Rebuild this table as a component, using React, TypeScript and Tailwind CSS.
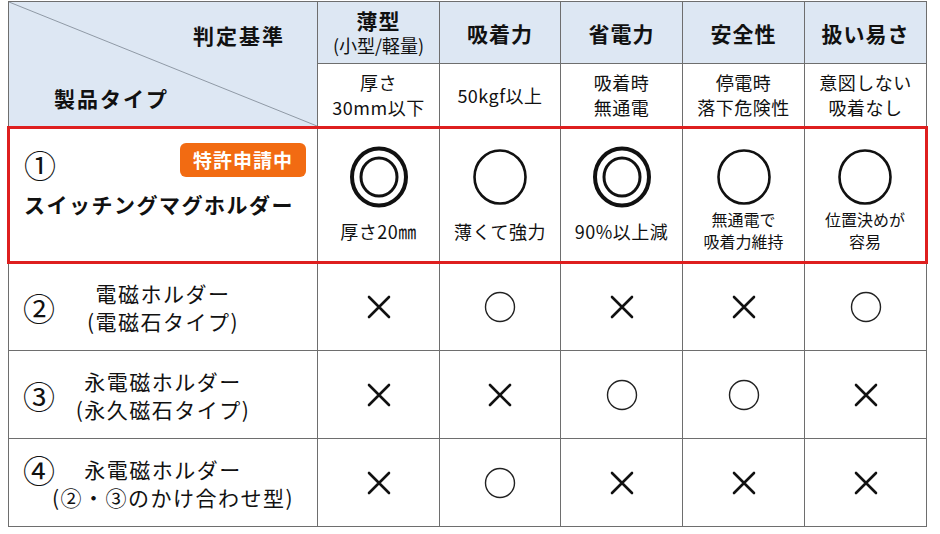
import type { ReactNode } from "react";

type Mark = "o" | "x";

const FONT = { fontFamily: '"Noto Sans CJK JP", "Noto Sans", sans-serif' };

const criteria = [
  { title: "薄型", sub: "(小型/軽量)", detail: ["厚さ", "30mm以下"] },
  { title: "吸着力", detail: ["50kgf以上"] },
  { title: "省電力", detail: ["吸着時", "無通電"] },
  { title: "安全性", detail: ["停電時", "落下危険性"] },
  { title: "扱い易さ", detail: ["意図しない", "吸着なし"] },
];

const featured: { mark: "double" | "single"; note: string[]; small?: boolean }[] = [
  { mark: "double", note: ["厚さ20㎜"] },
  { mark: "single", note: ["薄くて強力"] },
  { mark: "double", note: ["90%以上減"] },
  { mark: "single", note: ["無通電で", "吸着力維持"], small: true },
  { mark: "single", note: ["位置決めが", "容易"], small: true },
];

const others: { no: string; name: string; kind: string; wide?: boolean; marks: Mark[] }[] = [
  { no: "②", name: "電磁ホルダー", kind: "(電磁石タイプ)", marks: ["x", "o", "x", "x", "o"] },
  { no: "③", name: "永電磁ホルダー", kind: "(永久磁石タイプ)", marks: ["x", "x", "o", "o", "x"] },
  { no: "④", name: "永電磁ホルダー", kind: "(②・③のかけ合わせ型)", wide: true, marks: ["x", "o", "x", "x", "x"] },
];

function BigCircle({ double }: { double: boolean }) {
  if (double) {
    return (
      <svg width="62" height="64" viewBox="0 0 62 64">
        <ellipse cx="31" cy="32" rx="27" ry="28.5" fill="none" stroke="#111" strokeWidth="4" />
        <ellipse cx="31" cy="32" rx="18" ry="19" fill="none" stroke="#111" strokeWidth="3" />
      </svg>
    );
  }
  return (
    <svg width="58" height="60" viewBox="0 0 58 60">
      <ellipse cx="29" cy="30" rx="25.5" ry="26.5" fill="none" stroke="#111" strokeWidth="2.6" />
    </svg>
  );
}

function SmallMark({ mark }: { mark: Mark }) {
  if (mark === "o") {
    return (
      <svg width="32" height="32" viewBox="0 0 32 32">
        <circle cx="16" cy="16" r="14.5" fill="none" stroke="#222" strokeWidth="1.4" />
      </svg>
    );
  }
  return (
    <svg width="24" height="24" viewBox="0 0 24 24">
      <path d="M2 2 L22 22 M22 2 L2 22" stroke="#111" strokeWidth="2.6" strokeLinecap="round" />
    </svg>
  );
}

function Cell({ children, className = "" }: { children?: ReactNode; className?: string }) {
  return <td className={`border border-[#6e6e6e] p-0 align-middle text-center ${className}`}>{children}</td>;
}

function ProductName({ no, name, kind, wide }: { no: string; name: string; kind: string; wide?: boolean }) {
  const text = "whitespace-nowrap text-center text-[21px] leading-[28px] tracking-[1.5px]";
  if (wide) {
    // the long second line runs under the number, so the number sits on the first line
    return (
      <div className="flex flex-col">
        <div className="grid grid-cols-[38px_minmax(0,1fr)_38px] items-center">
          <span className="pl-[14px] text-left text-[32px] leading-[28px]">{no}</span>
          <div className={text}>{name}</div>
          <span />
        </div>
        <div className={`${text} pl-[20px]`}>{kind}</div>
      </div>
    );
  }
  return (
    <div className="grid grid-cols-[38px_minmax(0,1fr)_38px] items-center">
      <span className="pl-[14px] text-left text-[32px] leading-[34px]">{no}</span>
      <div className={text}>
        <div>{name}</div>
        <div>{kind}</div>
      </div>
      <span />
    </div>
  );
}

export default function App() {
  return (
    <div className="h-[534px] w-[940px] bg-white pl-[7px] pt-[1px] text-[#111]" style={FONT}>
      <table className="w-[918px] table-fixed border-collapse">
        <colgroup>
          <col className="w-[309px]" />
          <col className="w-[122px]" />
          <col className="w-[121px]" />
          <col className="w-[122px]" />
          <col className="w-[122px]" />
          <col className="w-[122px]" />
        </colgroup>
        <thead>
          <tr className="h-[62px]">
            <td rowSpan={2} className="relative border border-[#6e6e6e] bg-[#dde7f3] p-0">
              <svg className="absolute inset-0 h-full w-full" preserveAspectRatio="none" viewBox="0 0 100 100">
                <line x1="0" y1="0" x2="100" y2="100" stroke="#5a6570" strokeWidth="0.6" vectorEffect="non-scaling-stroke" />
              </svg>
              <div className="relative flex h-[124px] flex-col justify-between pb-[13px] pl-[45px] pr-[32px] pt-[18px]">
                <div className="self-end text-[21px] font-bold leading-[30px] tracking-[2px]">判定基準</div>
                <div className="self-start text-[21px] font-bold leading-[30px] tracking-[2px]">製品タイプ</div>
              </div>
            </td>
            {criteria.map((c) => (
              <Cell key={c.title} className="bg-[#dde7f3]">
                <div className={`text-[21px] font-bold tracking-[1px] ${c.sub ? "leading-[25px]" : "leading-[30px]"}`}>
                  {c.title}
                </div>
                {c.sub && <div className="whitespace-nowrap text-[18px] leading-[24px]">{c.sub}</div>}
              </Cell>
            ))}
          </tr>
          <tr className="h-[63px]">
            {criteria.map((c) => (
              <Cell key={c.title}>
                {c.detail.map((line) => (
                  <div key={line} className="whitespace-nowrap text-[18px] leading-[25px] tracking-[0.5px]">
                    {line}
                  </div>
                ))}
              </Cell>
            ))}
          </tr>
        </thead>
        <tbody>
          <tr className="h-[135px]">
            <td className="border-y-[3px] border-l-[3px] border-r border-y-[#de1f1f] border-l-[#de1f1f] border-r-[#6e6e6e] p-0 align-top">
              <div className="flex h-[129px] flex-col pl-[14px] pr-[11px] pt-[12px]">
                <div className="flex items-start justify-between">
                  <span className="mt-[6px] text-[32px] leading-[34px]">①</span>
                  <span className="mt-[2px] rounded-[6px] bg-[#f26b12] px-[13px] text-[19px] font-bold leading-[34px] tracking-[1px] text-white">
                    特許申請中
                  </span>
                </div>
                <div className="mt-[8px] whitespace-nowrap text-[21px] font-bold leading-[30px] tracking-[1.5px]">
                  スイッチングマグホルダー
                </div>
              </div>
            </td>
            {featured.map((f, i) => (
              <td
                key={i}
                className={`border-y-[3px] border-y-[#de1f1f] p-0 align-top ${
                  i === featured.length - 1 ? "border-r-[3px] border-r-[#de1f1f]" : "border-r border-r-[#6e6e6e]"
                } border-l border-l-[#6e6e6e]`}
              >
                <div className="flex h-[129px] flex-col items-center">
                  <div className="mt-[16px] flex h-[64px] items-center justify-center">
                    <BigCircle double={f.mark === "double"} />
                  </div>
                  <div className="flex flex-1 flex-col items-center justify-center pb-[6px]">
                    {f.note.map((line) => (
                      <div
                        key={line}
                        className={`whitespace-nowrap ${
                          f.small ? "text-[16px] leading-[22px]" : "text-[18px] leading-[24px] tracking-[0.5px]"
                        }`}
                      >
                        {line}
                      </div>
                    ))}
                  </div>
                </div>
              </td>
            ))}
          </tr>
          {others.map((row) => (
            <tr key={row.no} className="h-[88px]">
              <Cell>
                <ProductName no={row.no} name={row.name} kind={row.kind} wide={row.wide} />
              </Cell>
              {row.marks.map((m, i) => (
                <Cell key={i}>
                  <div className="flex items-center justify-center">
                    <SmallMark mark={m} />
                  </div>
                </Cell>
              ))}
            </tr>
          ))}
        </tbody>
      </table>
    </div>
  );
}
